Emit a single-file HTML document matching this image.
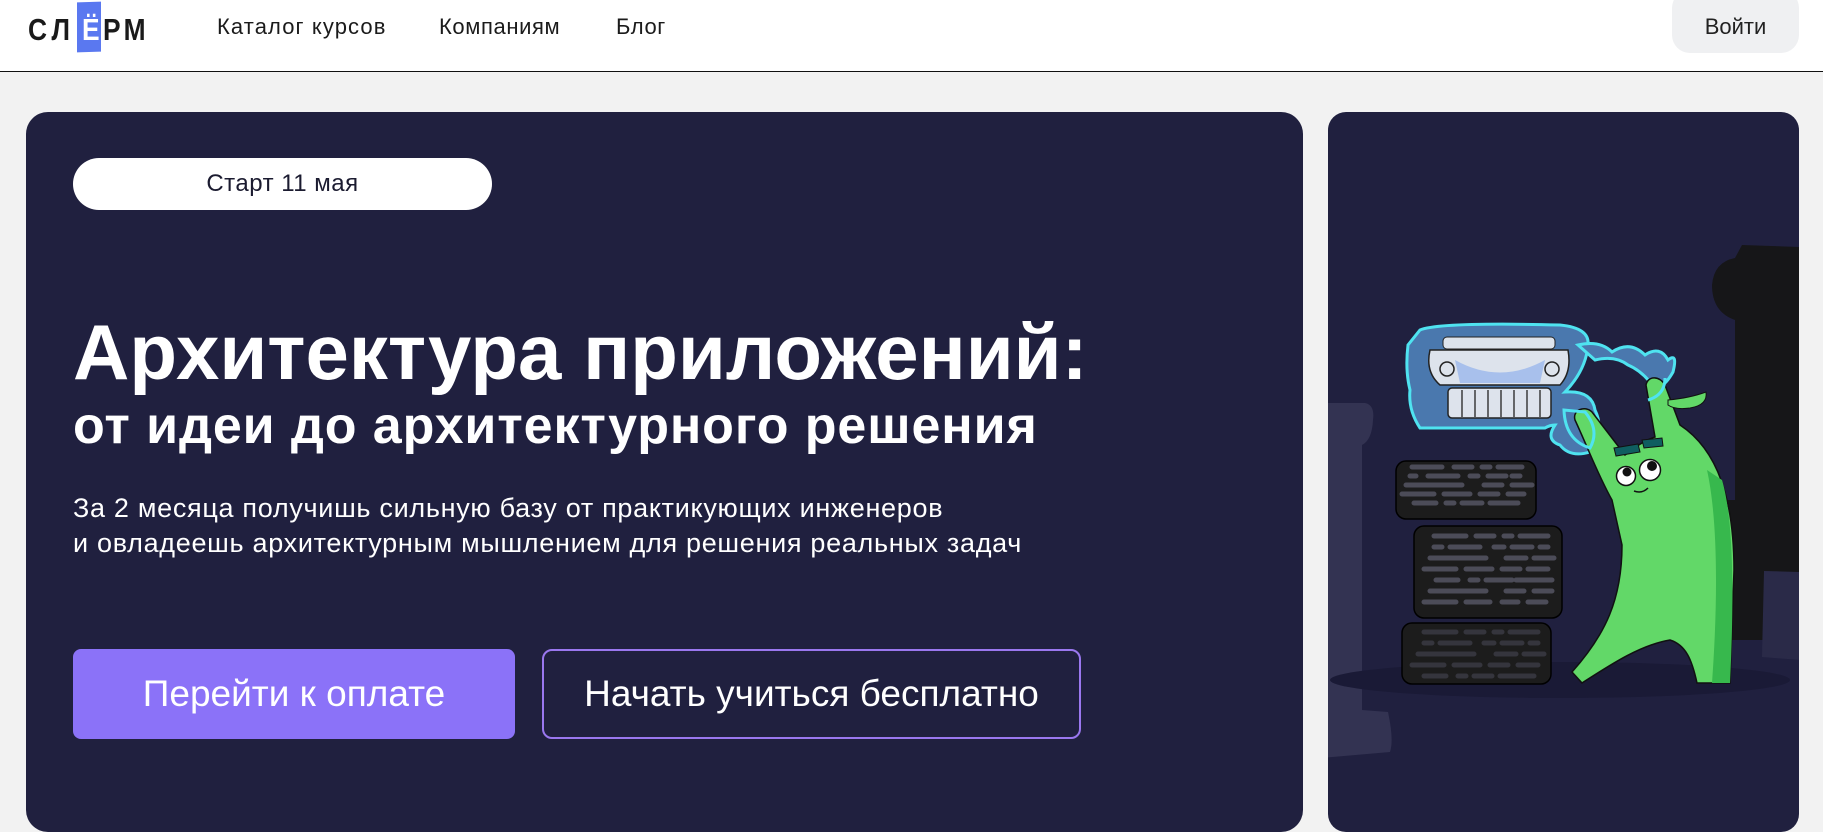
<!DOCTYPE html>
<html><head><meta charset="utf-8"><style>
*{margin:0;padding:0;box-sizing:border-box}
body{width:1823px;height:800px;overflow:hidden;background:#f2f2f2;font-family:"Liberation Sans",sans-serif;position:relative}
.hdr{position:absolute;left:0;top:0;width:1823px;height:72px;background:#fff;border-bottom:1.5px solid #111}
.lg{position:absolute;top:12px;font:bold 31px "Liberation Sans",sans-serif;color:#1a1a1a;transform:scaleX(.85);transform-origin:left}
.blue{position:absolute;left:77px;top:2px;width:24px;height:50px;background:#5a78f0;transform:skewY(-2deg)}
.nav{position:absolute;top:14px;font-size:22px;letter-spacing:.6px;color:#1b1b1b}
.btn{position:absolute;left:1672px;top:-10px;width:127px;height:63px;border-radius:18px;background:#eff0f2;font-size:22px;color:#222;text-align:center;line-height:73px}
.card{position:absolute;left:26px;top:112px;width:1277px;height:720px;background:#20203f;border-radius:22px}
.pill{position:absolute;left:73px;top:158px;width:419px;height:52px;background:#fff;border-radius:26px;text-align:center;line-height:52px;font-size:24px;letter-spacing:.5px;color:#1b1b30}
.t1{position:absolute;left:73px;top:310px;font:bold 78px/84px "Liberation Sans",sans-serif;color:#fff;white-space:nowrap}
.t2{position:absolute;left:73px;top:398px;font:bold 52px/56px "Liberation Sans",sans-serif;letter-spacing:.9px;color:#fff;white-space:nowrap}
.p{position:absolute;left:73px;top:491px;font-size:27px;letter-spacing:.7px;line-height:35px;color:#fff;white-space:nowrap}
.b1{position:absolute;left:73px;top:649px;width:442px;height:90px;background:#8b72f8;border-radius:8px;color:#fff;font-size:37px;text-align:center;line-height:90px}
.b2{position:absolute;left:542px;top:649px;width:539px;height:90px;border:2px solid #9a77ef;border-radius:10px;color:#fff;font-size:37px;text-align:center;line-height:86px}
.card2{position:absolute;left:1328px;top:112px;width:471px;height:720px;background:#20203f;border-radius:18px;overflow:hidden}
</style></head><body>
<div class="hdr">
 <div class="blue"></div>
 <div class="lg" style="left:28px;letter-spacing:6px">СЛ</div>
 <div class="lg" style="left:82px;color:#fff">Ё</div>
 <div class="lg" style="left:103px;letter-spacing:4px">РМ</div>
 <div class="nav" style="left:217px;letter-spacing:1.1px">Каталог курсов</div>
 <div class="nav" style="left:439px">Компаниям</div>
 <div class="nav" style="left:616px">Блог</div>
 <div class="btn">Войти</div>
</div>
<div class="card"></div>
<div class="pill">Старт 11 мая</div>
<div class="t1">Архитектура приложений:</div>
<div class="t2">от идеи до архитектурного решения</div>
<div class="p">За 2 месяца получишь сильную базу от практикующих инженеров<br>и овладеешь архитектурным мышлением для решения реальных задач</div>
<div class="b1">Перейти к оплате</div>
<div class="b2">Начать учиться бесплатно</div>
<div class="card2">
<svg width="471" height="720" viewBox="1328 112 471 720">
 <path d="M1320,403 L1365,403 Q1375,405 1373,420 Q1372,440 1362,445 L1362,710 L1388,712 Q1394,740 1390,752 L1320,758 Z" fill="#333352"/>
 <path d="M1742,245 L1800,247 L1800,640 L1700,640 L1700,500 L1735,500 L1735,320 Q1712,312 1712,285 Q1714,262 1735,258 Z" fill="#161618"/>
 <path d="M1764,571 L1800,572 L1800,660 L1762,657 Z" fill="#2a2a48"/>
 <ellipse cx="1560" cy="680" rx="230" ry="18" fill="#1a1a36"/>
 <g stroke="#000" stroke-width="1.5" fill="#1c1c1c">
  <rect x="1396" y="461" width="140" height="58" rx="10"/>
  <rect x="1414" y="526" width="148" height="92" rx="10"/>
  <rect x="1402" y="623" width="149" height="61" rx="10"/>
 </g>
 <g stroke="#4c4c58" stroke-width="5" stroke-linecap="round">
  <path d="M1412,467h30M1454,467h18M1482,467h8M1498,467h24M1410,476h6M1428,476h30M1470,476h8M1488,476h18M1512,476h8M1406,485h56M1484,485h18M1512,485h20M1402,494h32M1444,494h26M1480,494h18M1508,494h16M1414,503h22M1446,503h8M1462,503h20M1490,503h28"/>
  <path d="M1434,536h32M1476,536h18M1504,536h8M1520,536h28M1434,547h8M1450,547h30M1494,547h10M1512,547h20M1540,547h8M1430,558h56M1506,558h20M1534,558h20M1424,569h32M1466,569h26M1502,569h18M1528,569h20M1436,580h22M1470,580h8M1486,580h26M1516,580h36M1430,591h56M1506,591h18M1534,591h18M1424,602h32M1466,602h24M1502,602h16M1528,602h18"/>
  <path d="M1424,632h32M1466,632h18M1494,632h8M1510,632h28M1424,643h8M1440,643h30M1484,643h10M1502,643h20M1530,643h8M1418,654h56M1496,654h20M1524,654h20M1412,665h32M1454,665h26M1490,665h18M1518,665h20M1424,676h22M1458,676h8M1474,676h18M1500,676h34" stroke="#35353d"/>
 </g>
 <path d="M1420,330 Q1440,322 1560,325 Q1590,328 1588,345 Q1586,370 1565,392 Q1592,390 1595,410 Q1605,430 1590,452 Q1570,458 1560,445 Q1545,440 1555,425 Q1550,425 1545,428 L1420,428 Q1408,410 1410,390 Q1405,370 1408,345 Z" fill="#4a78ae" stroke="#4fe3f0" stroke-width="3"/>
 <path d="M1578,345 Q1600,340 1612,352 Q1630,340 1645,355 Q1660,345 1668,360 Q1678,352 1673,372 Q1660,395 1650,382 Q1640,370 1628,365 Q1615,355 1595,360 Z" fill="#4a78ae" stroke="#4fe3f0" stroke-width="3"/>
 <rect x="1443" y="337" width="112" height="12" rx="4" fill="#dde3ec" stroke="#222"/>
 <path d="M1430,350 L1568,350 Q1572,372 1560,385 L1440,385 Q1425,372 1430,350 Z" fill="#dde3ec" stroke="#222" stroke-width="1.5"/>
 <path d="M1455,360 Q1500,385 1545,360 L1540,383 L1460,383 Z" fill="#a8c0ec"/>
 <circle cx="1447" cy="369" r="7" fill="none" stroke="#222" stroke-width="1.5"/>
 <circle cx="1552" cy="369" r="7" fill="none" stroke="#222" stroke-width="1.5"/>
 <rect x="1448" y="388" width="103" height="30" rx="4" fill="#dde3ec" stroke="#222" stroke-width="1.5"/>
 <path d="M1462,390v27M1475,390v27M1488,390v27M1501,390v27M1514,390v27M1527,390v27M1540,390v27" stroke="#222" stroke-width="1.3"/>
 <path d="M1572,672 C1605,635 1622,600 1622,545 L1612,500 C1598,475 1588,448 1575,420 C1572,410 1585,405 1592,412 L1625,455 C1635,447 1645,440 1655,437 L1646,385 C1648,375 1660,376 1665,385 L1680,425 C1718,450 1734,500 1734,570 L1730,683 L1697,683 C1692,660 1686,645 1670,640 C1640,645 1610,665 1582,683 Z" fill="#62d868" stroke="#111" stroke-width="1.5"/>
 <path d="M1722,480 C1734,520 1734,600 1730,683 L1712,683 C1718,600 1718,520 1707,470 Z" fill="#37b84d"/>
 <path d="M1668,400 Q1690,398 1706,392 Q1708,405 1690,408 Q1675,410 1668,405 Z" fill="#62d868" stroke="#111"/>
 <path d="M1564,410 Q1565,440 1590,448 Q1600,430 1585,412 Z M1648,400 Q1665,395 1665,378" fill="none" stroke="#4fe3f0" stroke-width="3"/>
 <path d="M1614,448 L1638,444 L1640,452 L1616,456 Z M1642,440 L1662,438 L1663,446 L1644,448 Z" fill="#0f5e60" stroke="#111"/>
 <circle cx="1626" cy="476" r="9.5" fill="#fff" stroke="#111" stroke-width="1.5"/>
 <circle cx="1650" cy="470" r="10.5" fill="#fff" stroke="#111" stroke-width="1.5"/>
 <circle cx="1627" cy="472" r="4.5" fill="#111"/>
 <circle cx="1652" cy="466" r="5" fill="#111"/>
 <path d="M1634,491 Q1642,494 1648,488" fill="none" stroke="#111" stroke-width="1.5"/>
</svg>
</div>
</body></html>
